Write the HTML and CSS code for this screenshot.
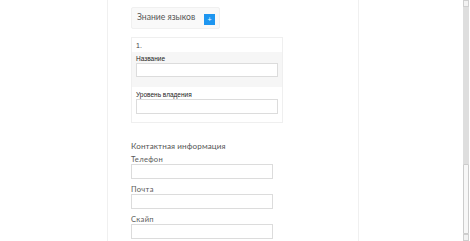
FILE: index.html
```html
<!DOCTYPE html>
<html lang="ru">
<head>
<meta charset="utf-8">
<title>Форма</title>
<link rel="stylesheet" href="styles.css">
</head>
<body>
<div class="page">
  <main class="sheet">
    <div class="lang-head">
      <span class="lang-title">Знание языков</span>
      <button class="add-btn" type="button">+</button>
    </div>
    <div class="lang-item">
      <div class="item-num">1.</div>
      <div class="item-row item-row--gray">
        <label class="small-label">Название</label>
        <div class="field field--item"></div>
      </div>
      <div class="item-row">
        <label class="small-label">Уровень владения</label>
        <div class="field field--item"></div>
      </div>
    </div>
    <section class="contacts">
      <h2 class="contacts-title">Контактная информация</h2>
      <div class="group">
        <label class="label">Телефон</label>
        <div class="field"></div>
      </div>
      <div class="group">
        <label class="label">Почта</label>
        <div class="field"></div>
      </div>
      <div class="group">
        <label class="label">Скайп</label>
        <div class="field"></div>
      </div>
    </section>
  </main>
  <div class="scrollbar">
    <div class="sb-arrow"></div>
    <div class="sb-track">
      <div class="sb-thumb"></div>
    </div>
    <div class="sb-arrow"></div>
  </div>
</div>
</body>
</html>
```
FILE: styles.css
```css
* { box-sizing: border-box; }
html, body { margin: 0; padding: 0; background: #fff; }
body { width: 470px; height: 241px; overflow: hidden; font-family: "Open Sans", "Liberation Sans", sans-serif; color: #555; }
.page { display: flex; height: 241px; }
.sheet {
  margin-left: 107px;
  width: 252px;
  height: 241px;
  border-left: 1px solid #f0f0f0;
  border-right: 1px solid #f0f0f0;
  padding: 7px 0 0 23px;
  display: flex;
  flex-direction: column;
  align-items: flex-start;
}
.lang-head {
  width: 89px;
  height: 22px;
  background: #f9f9f9;
  border: 1px solid #f0f0f0;
  border-radius: 2px;
  display: flex;
  align-items: center;
  justify-content: space-between;
  padding: 0 4px 0 4px;
}
.lang-title { font-family: Lato, "Open Sans", sans-serif; font-size: 8.6px; color: #555; line-height: 1; margin: -1px 0 0 1px; white-space: nowrap; }
.add-btn {
  flex: none;
  width: 11px; height: 11px; padding: 0; border: 0;
  background: #1e96f0; color: #fff; font-size: 7px; line-height: 11px;
  font-family: "Liberation Sans", sans-serif; margin-top: 3px;
}
.lang-item {
  margin-top: 8px;
  width: 152px;
  height: 86px;
  border: 1px solid #efefef;
  display: flex;
  flex-direction: column;
}
.item-num { height: 14px; font-size: 7px; padding: 4px 0 0 4px; font-family: "Liberation Sans", sans-serif; color: #444; line-height: 8px; }
.item-row { padding: 3px 4px 0 4px; display: flex; flex-direction: column; }
.item-row--gray { background: #f6f6f6; height: 35px; }
.small-label { font-family: "Liberation Sans", sans-serif; font-size: 6.5px; color: #222; line-height: 8px; height: 8px; }
.field {
  width: 142px;
  height: 15px;
  border: 1px solid #dcdcdc;
  background: #fff;
}
.field--item { height: 14px; margin-top: 0; }
.item-row + .item-row { padding-top: 4px; }
.item-row + .item-row .field--item { height: 15px; }
.contacts { margin-top: 18px; display: flex; flex-direction: column; }
.contacts-title { margin: 0; font-family: Lato, "Open Sans", sans-serif; font-size: 8.1px; font-weight: 400; color: #555; line-height: 10px; height: 10px; letter-spacing: 0.1px; white-space: nowrap; }
.group { display: flex; flex-direction: column; margin-top: 3px; }
.group + .group { margin-top: 5px; }
.label { font-family: Lato, "Open Sans", sans-serif; font-size: 7.6px; color: #5a5a5a; line-height: 10px; height: 10px; letter-spacing: 0.3px; }
.scrollbar {
  margin-left: auto;
  margin-right: 1px;
  width: 6px;
  height: 241px;
  display: flex;
  flex-direction: column;
  background: #dedede;
}
.sb-arrow { height: 7px; background: #f2f2f2; border: 1px solid #cfcfcf; }
.sb-track { flex: 1; display: flex; flex-direction: column; justify-content: flex-end; }
.sb-thumb { height: 70px; background: #f7f7f7; border: 1px solid #cccccc; border-radius: 1px; }
```
